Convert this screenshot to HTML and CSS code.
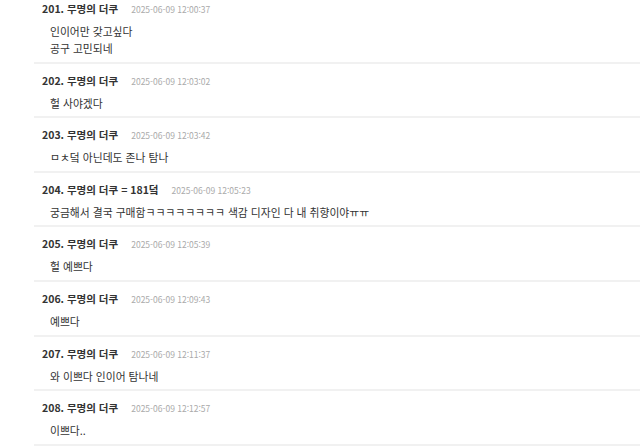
FILE: index.html
```html
<!DOCTYPE html>
<html lang="ko">
<head>
    <meta charset="UTF-8">
    <meta name="viewport" content="width=device-width, initial-scale=1.0">
    <title>댓글</title>
    <link rel="stylesheet" href="styles.css">
</head>
<body>
    <ul class="comment-list">
        <li class="comment">
            <div class="comment-head">
                <span class="comment-name">201. 무명의 더쿠</span>
                <span class="comment-date">2025-06-09 12:00:37</span>
            </div>
            <div class="comment-body">인이어만 갖고싶다<br>공구 고민되네</div>
        </li>
        <li class="comment">
            <div class="comment-head">
                <span class="comment-name">202. 무명의 더쿠</span>
                <span class="comment-date">2025-06-09 12:03:02</span>
            </div>
            <div class="comment-body">헐 사야겠다</div>
        </li>
        <li class="comment">
            <div class="comment-head">
                <span class="comment-name">203. 무명의 더쿠</span>
                <span class="comment-date">2025-06-09 12:03:42</span>
            </div>
            <div class="comment-body">ㅁㅊ덬 아닌데도 존나 탐나</div>
        </li>
        <li class="comment">
            <div class="comment-head">
                <span class="comment-name">204. 무명의 더쿠 = 181덬</span>
                <span class="comment-date">2025-06-09 12:05:23</span>
            </div>
            <div class="comment-body">궁금해서 결국 구매함ㅋㅋㅋㅋㅋㅋㅋㅋ 색감 디자인 다 내 취향이야ㅠㅠ</div>
        </li>
        <li class="comment">
            <div class="comment-head">
                <span class="comment-name">205. 무명의 더쿠</span>
                <span class="comment-date">2025-06-09 12:05:39</span>
            </div>
            <div class="comment-body">헐 예쁘다</div>
        </li>
        <li class="comment">
            <div class="comment-head">
                <span class="comment-name">206. 무명의 더쿠</span>
                <span class="comment-date">2025-06-09 12:09:43</span>
            </div>
            <div class="comment-body">예쁘다</div>
        </li>
        <li class="comment">
            <div class="comment-head">
                <span class="comment-name">207. 무명의 더쿠</span>
                <span class="comment-date">2025-06-09 12:11:37</span>
            </div>
            <div class="comment-body">와 이쁘다 인이어 탐나네</div>
        </li>
        <li class="comment">
            <div class="comment-head">
                <span class="comment-name">208. 무명의 더쿠</span>
                <span class="comment-date">2025-06-09 12:12:57</span>
            </div>
            <div class="comment-body">이쁘다..</div>
        </li>
    </ul>
</body>
</html>
```

FILE: styles.css
```css
body {
    margin: 0;
    padding: 0;
    background: #fff;
    font-family: "Noto Sans CJK KR", "Noto Sans", sans-serif;
    overflow: hidden;
}

.comment-list {
    list-style: none;
    margin: -8px 0 0 34px;
    padding: 0;
}

.comment {
    border-bottom: 2px solid #f1f1f1;
    padding: 7px 0 4.6px 8px;
}

.comment-head {
    display: flex;
    align-items: baseline;
    gap: 13px;
    height: 20px;
    line-height: 20px;
}

.comment-name {
    font-size: 10.5px;
    font-weight: bold;
    color: #333;
}

.comment-date {
    font-size: 8.5px;
    color: #aaa;
}

.comment-body {
    margin-top: 4px;
    padding-left: 8px;
    font-size: 10.8px;
    line-height: 17px;
    color: #333;
}
```
